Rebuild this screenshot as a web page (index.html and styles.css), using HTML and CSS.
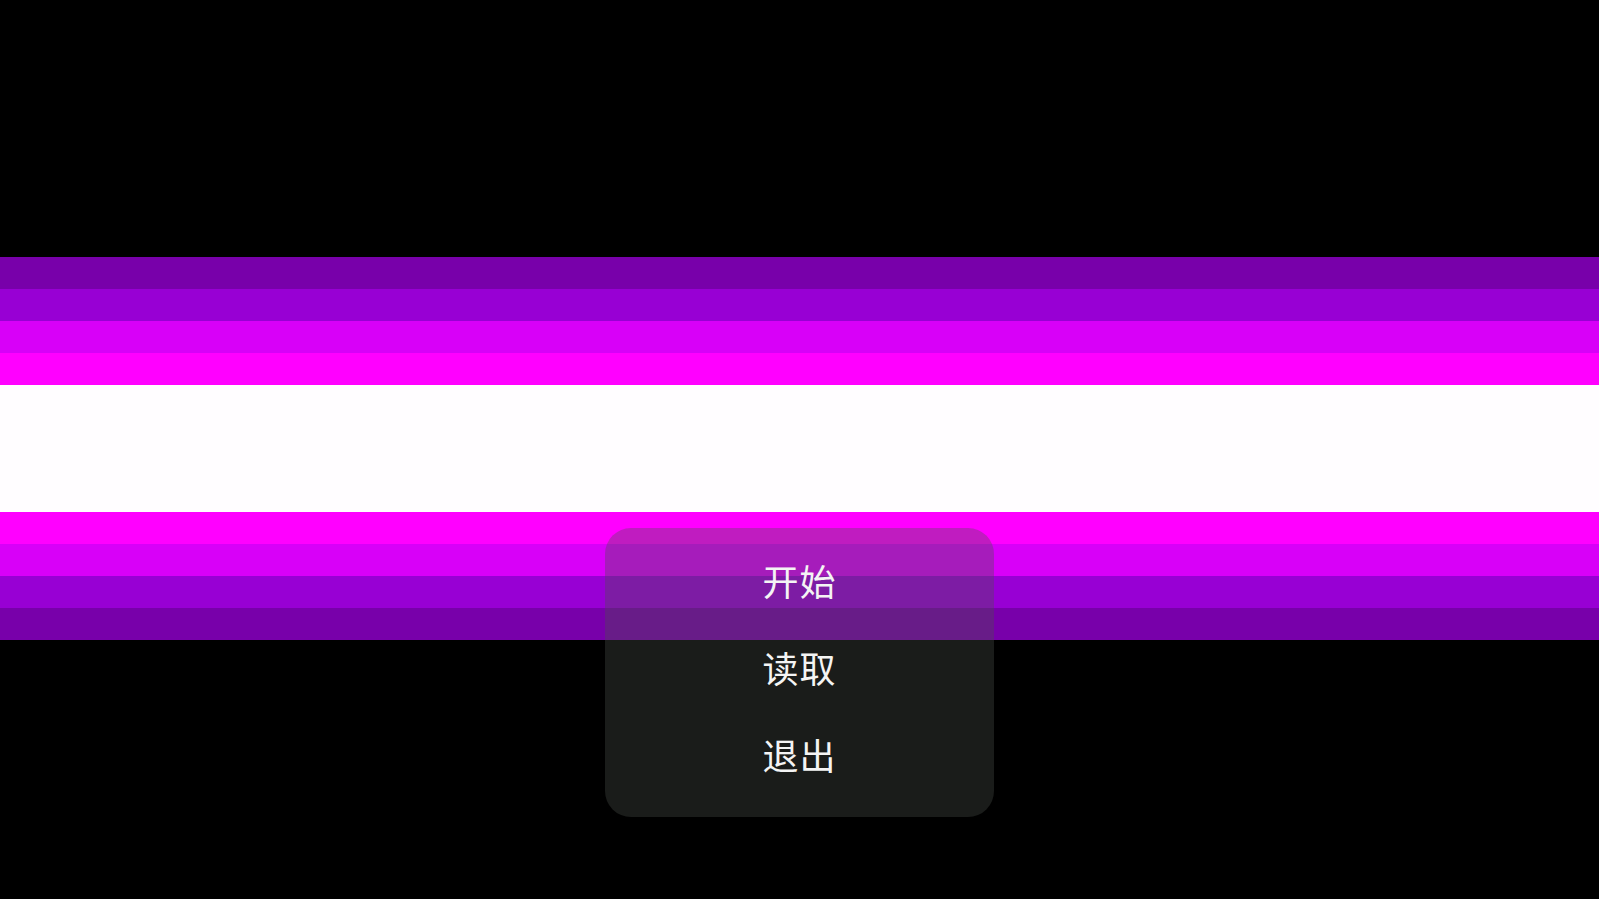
FILE: index.html
```html
<!DOCTYPE html>
<html lang="zh">
<head>
<meta charset="utf-8">
<title>标题</title>
<link rel="stylesheet" href="styles.css">
</head>
<body>
<div class="screen">
  <div class="flag">
    <div class="band b1"></div>
    <div class="band b2"></div>
    <div class="band b3"></div>
    <div class="band b4"></div>
    <div class="band white"></div>
    <div class="band b4"></div>
    <div class="band b3"></div>
    <div class="band b2"></div>
    <div class="band b1"></div>
  </div>
  <nav class="menu">
    <div class="item">开始</div>
    <div class="item">读取</div>
    <div class="item">退出</div>
  </nav>
</div>
</body>
</html>
```
FILE: styles.css
```css
html, body {
  margin: 0;
  padding: 0;
  background: #000;
}
.screen {
  position: relative;
  width: 1599px;
  height: 899px;
  overflow: hidden;
  background: #000;
  font-family: "Noto Sans CJK SC", "Noto Sans", sans-serif;
}
.flag {
  padding-top: 257px;
  display: flex;
  flex-direction: column;
}
.band {
  height: 32px;
}
.b1 { background: #7800aa; }
.b2 { background: #9800d4; }
.b3 { background: #d800f8; }
.b4 { background: #ff00ff; }
.white {
  height: 127px;
  background: #fffdff;
}
.menu {
  position: absolute;
  left: 605px;
  top: 528px;
  width: 389px;
  height: 289px;
  box-sizing: border-box;
  padding: 8px 0 20px;
  border-radius: 26px;
  background: rgba(74, 80, 74, 0.35);
  display: flex;
  flex-direction: column;
}
.item {
  flex: 1;
  display: flex;
  align-items: center;
  justify-content: center;
  color: #f4f4f4;
  font-size: 36px;
  letter-spacing: 1px;
}
```
